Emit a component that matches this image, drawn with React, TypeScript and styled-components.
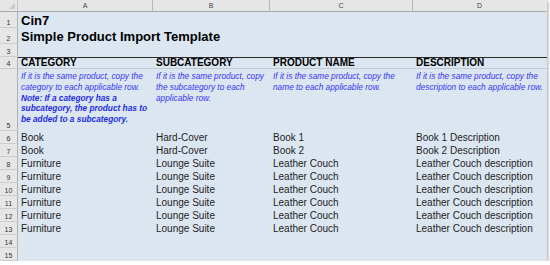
import styled, { createGlobalStyle } from 'styled-components';

const GlobalStyle = createGlobalStyle`
  body {
    margin: 0;
    background: #ffffff;
    font-family: "Liberation Sans", Arial, sans-serif;
  }
`;

const COLS = ['A', 'B', 'C', 'D'];
const COL_WIDTHS = [135, 117, 143, 134];

interface DataRow {
  category: string;
  subcategory: string;
  name: string;
  description: string;
}

const dataRows: DataRow[] = [
  { category: 'Book', subcategory: 'Hard-Cover', name: 'Book 1', description: 'Book 1 Description' },
  { category: 'Book', subcategory: 'Hard-Cover', name: 'Book 2', description: 'Book 2 Description' },
  ...Array.from({ length: 6 }, () => ({
    category: 'Furniture',
    subcategory: 'Lounge Suite',
    name: 'Leather Couch',
    description: 'Leather Couch description',
  })),
];

const notes = [
  'If it is the same product, copy the subcategory to each applicable row.',
  'If it is the same product, copy the name to each applicable row.',
  'If it is the same product, copy the description to each applicable row.',
];

const Sheet = styled.div`
  display: grid;
  grid-template-columns: 18px ${COL_WIDTHS.map((w) => `${w}px`).join(' ')};
  grid-template-rows: 12px 16px 16px 13px 12px 62px repeat(10, 13px);
  width: 547px;
  background: #dce6f1;
  box-shadow: 1px 1px 3px rgba(0, 0, 0, 0.35);
`;

const Corner = styled.div`
  background: #e6e6e6;
  border-right: 1px solid #c4c4c4;
  border-bottom: 1px solid #a9a9a9;
  position: relative;

  &::after {
    content: '';
    position: absolute;
    right: 2px;
    bottom: 2px;
    border-left: 6px solid transparent;
    border-bottom: 6px solid #c9c9c9;
  }
`;

const ColHead = styled.div<{ $last?: boolean }>`
  background: #e6e6e6;
  border-right: 1px solid ${(p) => (p.$last ? '#e6e6e6' : '#b8b8b8')};
  border-bottom: 1px solid #a9a9a9;
  font-size: 7px;
  color: #444;
  display: flex;
  align-items: center;
  justify-content: center;
`;

const RowHead = styled.div`
  background: #e6e6e6;
  border-right: 1px solid #b0b0b0;
  border-bottom: 1px solid #cdcdcd;
  font-size: 7px;
  color: #333;
  display: flex;
  align-items: flex-end;
  justify-content: center;
  padding-bottom: 1px;
`;

const Cell = styled.div<{ $span?: number; $ruled?: boolean }>`
  grid-column: span ${(p) => p.$span ?? 1};
  padding: 0 3px;
  white-space: nowrap;
  overflow: visible;
  display: flex;
  align-items: flex-end;
  font-size: 10px;
  line-height: 12px;
  color: #1e1e1e;
  border-top: ${(p) => (p.$ruled ? '1px solid #2b2b2b' : 'none')};
  border-bottom: ${(p) => (p.$ruled ? '1px solid #c3cbd6' : 'none')};
`;

const Title = styled(Cell)`
  font-size: 13px;
  font-weight: bold;
  color: #000;
  line-height: 15px;
`;

const Heading = styled(Cell)`
  font-weight: bold;
  color: #000;
  line-height: 11px;
`;

const NoteCell = styled.div`
  padding: 2px 3px 0;
  font-size: 8.3px;
  line-height: 10.8px;
  font-style: italic;
  color: #3535f5;
  white-space: normal;
`;

const NoteStrong = styled.span`
  font-weight: bold;
  color: #1d2de0;
`;

const headings = ['CATEGORY', 'SUBCATEGORY', 'PRODUCT NAME', 'DESCRIPTION'];

export default function App() {
  return (
    <>
      <GlobalStyle />
      <Sheet>
        <Corner />
        {COLS.map((c, i) => (
          <ColHead key={c} $last={i === COLS.length - 1}>
            {c}
          </ColHead>
        ))}

        <RowHead>1</RowHead>
        <Title $span={4}>Cin7</Title>

        <RowHead>2</RowHead>
        <Title $span={4}>Simple Product Import Template</Title>

        <RowHead>3</RowHead>
        <Cell $span={4} />

        <RowHead>4</RowHead>
        {headings.map((h) => (
          <Heading key={h} $ruled>
            {h}
          </Heading>
        ))}

        <RowHead>5</RowHead>
        <NoteCell>
          If it is the same product, copy the category to each applicable row.{' '}
          <NoteStrong>
            Note: If a category has a subcategory, the product has to be added to a subcategory.
          </NoteStrong>
        </NoteCell>
        {notes.map((n) => (
          <NoteCell key={n}>{n}</NoteCell>
        ))}

        {dataRows.map((r, i) => (
          <DataLine key={i} n={i + 6} row={r} />
        ))}

        <RowHead>14</RowHead>
        <Cell $span={4} />
        <RowHead>15</RowHead>
        <Cell $span={4} />
      </Sheet>
    </>
  );
}

function DataLine({ n, row }: { n: number; row: DataRow }) {
  return (
    <>
      <RowHead>{n}</RowHead>
      <Cell>{row.category}</Cell>
      <Cell>{row.subcategory}</Cell>
      <Cell>{row.name}</Cell>
      <Cell>{row.description}</Cell>
    </>
  );
}
